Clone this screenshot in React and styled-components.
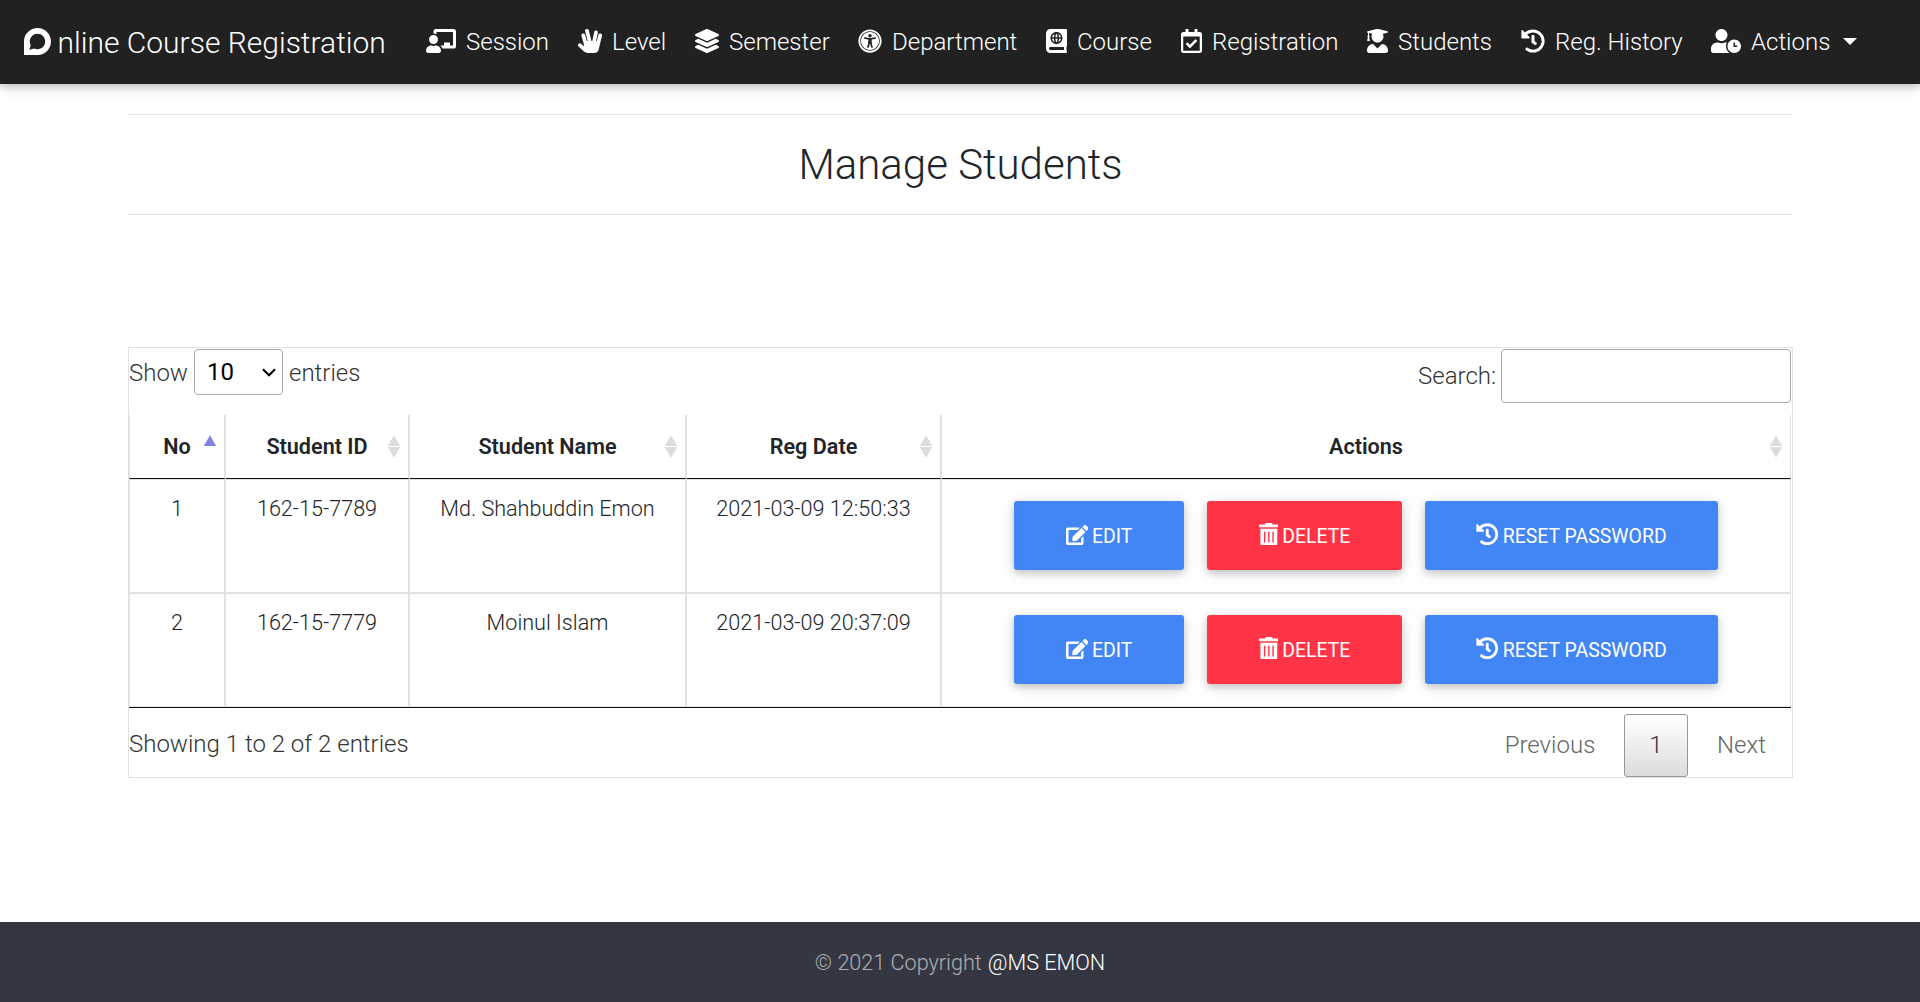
import React from "react";
import styled, { createGlobalStyle, css } from "styled-components";
import {
  FaDiscourse,
  FaChalkboardTeacher,
  FaHandSpock,
  FaLayerGroup,
  FaUniversalAccess,
  FaAtlas,
  FaRegCalendarCheck,
  FaUserGraduate,
  FaHistory,
  FaUserClock,
  FaEdit,
  FaTrashAlt,
} from "react-icons/fa";

const GlobalStyle = createGlobalStyle`
  *, *::before, *::after { box-sizing: border-box; }
  body {
    margin: 0;
    background: #fff;
    color: #212529;
    font-family: Roboto, "Open Sans", sans-serif;
    font-size: 24px;
    font-weight: 300;
    line-height: 1.5;
  }
`;

const Page = styled.div`
  display: flex;
  flex-direction: column;
  height: 1002px;
  overflow: hidden;
`;

const Navbar = styled.nav`
  display: flex;
  align-items: center;
  height: 84px;
  flex: none;
  padding: 0 24px;
  background: #212121;
  color: #fff;
  box-shadow: 0 3px 7.5px rgba(0, 0, 0, 0.16), 0 3px 15px rgba(0, 0, 0, 0.12);
`;

const Brand = styled.a`
  display: flex;
  align-items: center;
  gap: 6.5px;
  width: 402px;
  flex: none;
  padding-top: 1px;
  font-size: 30px;
  white-space: nowrap;
  svg { width: 27px; height: 31px; margin-top: -2px; }
`;

const NavLink = styled.a`
  display: flex;
  align-items: center;
  width: ${(p) => p.$width}px;
  flex: none;
  white-space: nowrap;
  svg {
    width: ${(p) => p.$icon}px;
    height: 24px;
    margin: -2px 10px 0 0;
    flex: none;
  }
`;

const Caret = styled.span`
  margin: -2px 0 0 13px;
  border-top: 7px solid #fff;
  border-left: 7px solid transparent;
  border-right: 7px solid transparent;
`;

const Main = styled.main`
  flex: 1;
  padding: 30px 127px 0 128px;
`;

const Title = styled.h1`
  display: flex;
  align-items: center;
  justify-content: center;
  height: 101px;
  margin: 0 0 132px;
  border-top: 1px solid #e2e2e2;
  border-bottom: 1px solid #e4e4e4;
  font-size: 42px;
  font-weight: 300;
`;

const Panel = styled.section`
  height: 431px;
  padding: 1px 1px 0 0;
  border: 1px solid #dee2e6;
`;

const Toolbar = styled.div`
  display: flex;
  justify-content: space-between;
  height: 66px;
  color: #333;
`;

const Field = styled.label`
  display: flex;
  align-items: center;
  gap: ${(p) => p.$gap}px;
  height: ${(p) => p.$height}px;
`;

const FieldText = styled.span`
  padding-top: ${(p) => p.$drop || 0}px;
`;

const SelectBox = styled.span`
  display: grid;
  grid-template-columns: 68px 14px 7px;
  align-items: center;
  width: 89px;
  height: 46px;
  svg { grid-area: 1 / 2; width: 14px; height: 9px; pointer-events: none; }
`;

const LengthSelect = styled.select`
  grid-area: 1 / 1 / 2 / 4;
  appearance: none;
  height: 46px;
  padding: 0 0 0 12px;
  border: 1px solid #aaa;
  border-radius: 4px;
  background: transparent;
  color: #000;
  font: 400 24px Roboto, sans-serif;
`;

const SearchInput = styled.input`
  width: 290px;
  height: 54px;
  border: 1px solid #aaa;
  border-radius: 4px;
  background: transparent;
`;

const Table = styled.div`
  display: grid;
  grid-template-columns: 97px 184px 277px 255px 1fr;
  border-bottom: 1px solid #111;
`;

const cell = css`
  display: flex;
  justify-content: center;
  border-right: 2px solid #dee2e6;
  &:nth-child(5n) { border-right-width: 1px; }
  &:nth-child(5n + 1) { border-left: 1px solid #dee2e6; }
`;

const HeadCell = styled.div`
  ${cell}
  align-items: center;
  position: relative;
  height: 64px;
  padding-top: 1px;
  border-bottom: 1px solid #111;
  font-size: 21.6px;
  font-weight: 600;
`;

const SortMark = styled.svg`
  position: absolute;
  top: 20px;
  right: 7px;
  width: 14px;
  height: 23px;
`;

const Cell = styled.div`
  ${cell}
  height: ${(p) => (p.$first ? 115 : 113)}px;
  padding-top: 12px;
  border-top: ${(p) => (p.$first ? 1 : 0)}px solid #dee2e6;
  border-bottom: ${(p) => (p.$first ? 2 : 1)}px solid #dee2e6;
  font-size: 21.6px;
  line-height: 34px;
`;

const ActionCell = styled(Cell)`
  gap: 23px;
  padding-top: 21px;
`;

const ActionButton = styled.button`
  display: flex;
  align-items: center;
  justify-content: center;
  gap: 4px;
  width: ${(p) => p.$width}px;
  height: 69px;
  padding: 1px 0 0;
  border: 0;
  border-radius: 3px;
  background: ${(p) => (p.$danger ? "#ff3547" : "#4285f4")};
  color: #fff;
  font: 400 19.44px Roboto, sans-serif;
  text-transform: uppercase;
  box-shadow: 0 3px 7.5px rgba(0, 0, 0, 0.16), 0 3px 15px rgba(0, 0, 0, 0.12);
  svg {
    width: ${(p) => p.$icon[0]}px;
    height: ${(p) => p.$icon[1]}px;
    margin-top: ${(p) => p.$icon[2]}px;
  }
`;

const PanelFooter = styled.div`
  display: flex;
  justify-content: space-between;
  height: 69px;
  padding-top: 6px;
  color: #333;
`;

const Info = styled.div`
  padding-top: 12px;
`;

const Pager = styled.div`
  display: flex;
  align-items: center;
  gap: 2px;
  height: 63px;
`;

const PageButton = styled.a`
  display: flex;
  align-items: center;
  justify-content: center;
  width: ${(p) => p.$width}px;
  height: 63px;
  padding-bottom: 2px;
  color: ${(p) => (p.$current ? "#333" : "#666")};
  ${(p) =>
    p.$current &&
    css`
      border: 1px solid #979797;
      border-radius: 3px;
      background: linear-gradient(#fff 0%, #dcdcdc 100%);
    `}
`;

const NextButton = styled(PageButton)`
  padding-left: 2px;
`;

const Footer = styled.footer`
  display: flex;
  align-items: center;
  justify-content: center;
  gap: 6px;
  height: 80px;
  flex: none;
  padding-top: 3px;
  background: #343741;
  color: rgba(255, 255, 255, 0.6);
  font-size: 21.6px;
  a { color: #fff; }
`;

const links = [
  { label: "Session", Icon: FaChalkboardTeacher, icon: 30, width: 152 },
  { label: "Level", Icon: FaHandSpock, icon: 24, width: 117 },
  { label: "Semester", Icon: FaLayerGroup, icon: 24, width: 163 },
  { label: "Department", Icon: FaUniversalAccess, icon: 24, width: 188 },
  { label: "Course", Icon: FaAtlas, icon: 21, width: 135 },
  { label: "Registration", Icon: FaRegCalendarCheck, icon: 21, width: 186 },
  { label: "Students", Icon: FaUserGraduate, icon: 21, width: 154 },
  { label: "Reg. History", Icon: FaHistory, icon: 24, width: 190 },
  { label: "Actions", Icon: FaUserClock, icon: 30, width: 150, caret: true },
];

const columns = ["No", "Student ID", "Student Name", "Reg Date", "Actions"];

const students = [
  ["1", "162-15-7789", "Md. Shahbuddin Emon", "2021-03-09 12:50:33"],
  ["2", "162-15-7779", "Moinul Islam", "2021-03-09 20:37:09"],
];

function Sorter({ active }) {
  return (
    <SortMark viewBox="0 0 14 23">
      <path d="M7 0.3 L13.2 11 H0.8 Z" fill={active ? "#7f83e0" : "#dcdcdc"} />
      {!active && <path d="M7 22.7 L13.2 12 H0.8 Z" fill="#dcdcdc" />}
    </SortMark>
  );
}

export default function App() {
  return (
    <Page>
      <GlobalStyle />
      <Navbar>
        <Brand>
          <FaDiscourse />
          nline Course Registration
        </Brand>
        {links.map(({ label, Icon, icon, width, caret }) => (
          <NavLink key={label} $icon={icon} $width={width}>
            <Icon />
            {label}
            {caret && <Caret />}
          </NavLink>
        ))}
      </Navbar>
      <Main>
        <Title>Manage Students</Title>
        <Panel>
          <Toolbar>
            <Field $height={46} $gap={6}>
              <FieldText $drop={2}>Show</FieldText>
              <SelectBox>
                <LengthSelect defaultValue="10">
                  <option>10</option>
                  <option>25</option>
                </LengthSelect>
                <svg viewBox="0 0 14 9" fill="none" stroke="#000" strokeWidth="2.2">
                  <path d="M1 1.2 L7 7.2 L13 1.2" />
                </svg>
              </SelectBox>
              <FieldText $drop={2}>entries</FieldText>
            </Field>
            <Field $height={54} $gap={5}>
              <FieldText>Search:</FieldText>
              <SearchInput type="search" />
            </Field>
          </Toolbar>
          <Table>
            {columns.map((name, i) => (
              <HeadCell key={name}>
                {name}
                <Sorter active={i === 0} />
              </HeadCell>
            ))}
            {students.map((row, r) => (
              <React.Fragment key={row[0]}>
                {row.map((value) => (
                  <Cell key={value} $first={r === 0}>
                    {value}
                  </Cell>
                ))}
                <ActionCell $first={r === 0}>
                  <ActionButton $width={170} $icon={[22.5, 20, -2]}>
                    <FaEdit />
                    Edit
                  </ActionButton>
                  <ActionButton $width={195} $icon={[19.7, 22.5, -4]} $danger>
                    <FaTrashAlt />
                    Delete
                  </ActionButton>
                  <ActionButton $width={293} $icon={[22.5, 22.5, -4]}>
                    <FaHistory />
                    Reset Password
                  </ActionButton>
                </ActionCell>
              </React.Fragment>
            ))}
          </Table>
          <PanelFooter>
            <Info>Showing 1 to 2 of 2 entries</Info>
            <Pager>
              <PageButton $width={144}>Previous</PageButton>
              <PageButton $width={64} $current>
                1
              </PageButton>
              <NextButton $width={101}>Next</NextButton>
            </Pager>
          </PanelFooter>
        </Panel>
      </Main>
      <Footer>
        © 2021 Copyright <a>@MS EMON</a>
      </Footer>
    </Page>
  );
}
